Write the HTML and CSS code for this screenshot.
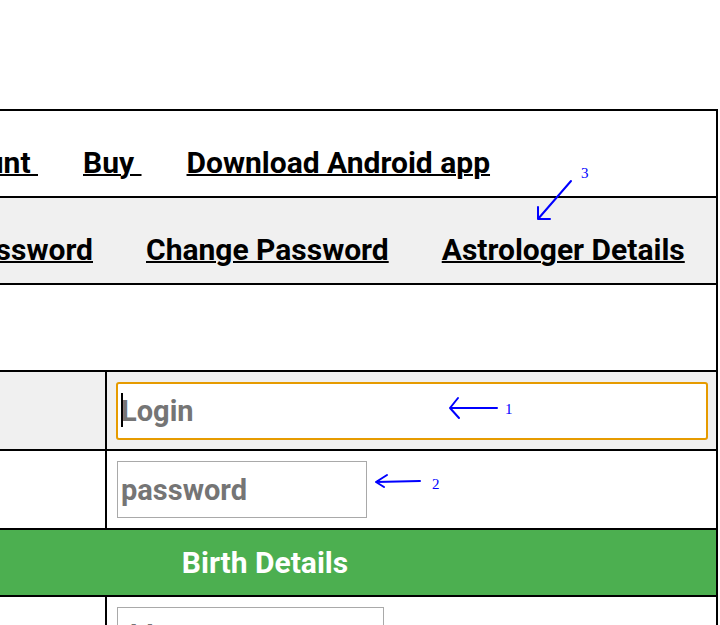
FILE: index.html
```html
<!DOCTYPE html>
<html lang="en">
<head>
<meta charset="utf-8">
<title>Login</title>
<link rel="stylesheet" href="styles.css">
</head>
<body>
<div class="frame">
  <nav class="nav-row nav-top">
    <div class="nav-lead">
      <a href="#">Home</a>
      <a href="#">My Account&nbsp;</a>
    </div>
    <a href="#">Buy&nbsp;</a>
    <a href="#">Download Android app</a>
  </nav>
  <nav class="nav-row nav-sub">
    <div class="nav-lead">
      <a href="#">Register</a>
      <a href="#">Forgot Password</a>
    </div>
    <a href="#">Change Password</a>
    <a href="#">Astrologer Details</a>
  </nav>
  <div class="blank-row"></div>
  <div class="form-row shaded">
    <div class="label-cell"></div>
    <div class="field-cell field-cell-login">
      <span class="field-wrap">
        <input class="field field-login" type="text" placeholder="Login">
        <span class="caret"></span>
      </span>
    </div>
  </div>
  <div class="form-row">
    <div class="label-cell"></div>
    <div class="field-cell">
      <input class="field field-pass" type="password" placeholder="password">
    </div>
  </div>
  <div class="section-row">Birth Details</div>
  <div class="form-row">
    <div class="label-cell"></div>
    <div class="field-cell">
      <input class="field field-date" type="text" placeholder="dd/mm/yyyy">
    </div>
  </div>
</div>
<svg class="notes" width="720" height="625" viewBox="0 0 720 625">
  <g stroke="#0000ff" stroke-width="2" fill="none" stroke-linecap="round">
    <path d="M497 408 H450 M450 408 L458 398 M450 408 L459 418"/>
    <path d="M420 481 L376 482 M376 482 L387 475 M376 482 L384 487"/>
    <path d="M571 181 L538 219 M538 219 H550 M538 219 V207"/>
  </g>
  <g class="note-num">
    <text x="505" y="414">1</text>
    <text x="432" y="489">2</text>
    <text x="581" y="178">3</text>
  </g>
</svg>
</body>
</html>
```
FILE: styles.css
```css
* { box-sizing: border-box; }
html, body { margin: 0; padding: 0; background: #fff; }
body {
  position: relative;
  width: 720px;
  height: 625px;
  overflow: hidden;
  font-family: Roboto, "Noto Sans", "Liberation Sans", sans-serif;
  font-weight: 700;
  color: #000;
}
.frame {
  margin: 109px 0 0 -188px;
  width: 906px;
  border: 2px solid #000;
  border-bottom: 0;
}
.nav-row {
  display: flex;
  align-items: flex-start;
  height: 87px;
  padding-top: 34px;
  border-bottom: 2px solid #000;
  font-size: 30px;
  white-space: nowrap;
}
.nav-row a {
  color: #000;
  text-decoration: underline;
  text-decoration-thickness: 2px;
}
.nav-lead {
  flex: 0 0 auto;
  display: flex;
  justify-content: flex-end;
}
.nav-top { gap: 45px; }
.nav-top .nav-lead { width: 224px; gap: 45px; }
.nav-sub { gap: 53px; background: #f0f0f0; }
.nav-sub .nav-lead { width: 279px; gap: 53px; }
.blank-row {
  height: 87px;
  border-bottom: 2px solid #000;
}
.form-row {
  display: flex;
  border-bottom: 2px solid #000;
}
.shaded { background: #f0f0f0; }
.label-cell {
  flex: 0 0 293px;
  border-right: 2px solid #000;
}
.field-cell {
  flex: 1 1 auto;
  padding: 10px 8px 10px 10px;
}
.field-cell-login { padding-bottom: 9px; }
.field-wrap {
  position: relative;
  display: block;
  margin-left: -1px;
}
.field {
  display: block;
  height: 57px;
  padding: 0 3px;
  border: 1px solid #a9a9a9;
  background: #fff;
  font-family: inherit;
  font-weight: 700;
  font-size: 29px;
  color: #000;
}
.field::placeholder { color: #757575; opacity: 1; }
.field-login {
  width: 592px;
  height: 58px;
  border: 2px solid #e69b00;
  border-radius: 3px;
  outline: none;
}
.field-pass { width: 250px; }
.field-date { width: 267px; }
.caret {
  position: absolute;
  left: 5px;
  top: 11px;
  width: 2px;
  height: 34px;
  background: #000;
}
.section-row {
  height: 67px;
  display: flex;
  align-items: center;
  justify-content: center;
  background: #4caf50;
  color: #fff;
  font-size: 30px;
  border-bottom: 2px solid #000;
}
.notes {
  position: absolute;
  left: 0;
  top: 0;
  pointer-events: none;
}
.note-num {
  fill: #0000ff;
  font-family: "Liberation Serif", serif;
  font-weight: 400;
  font-size: 15px;
}
```
